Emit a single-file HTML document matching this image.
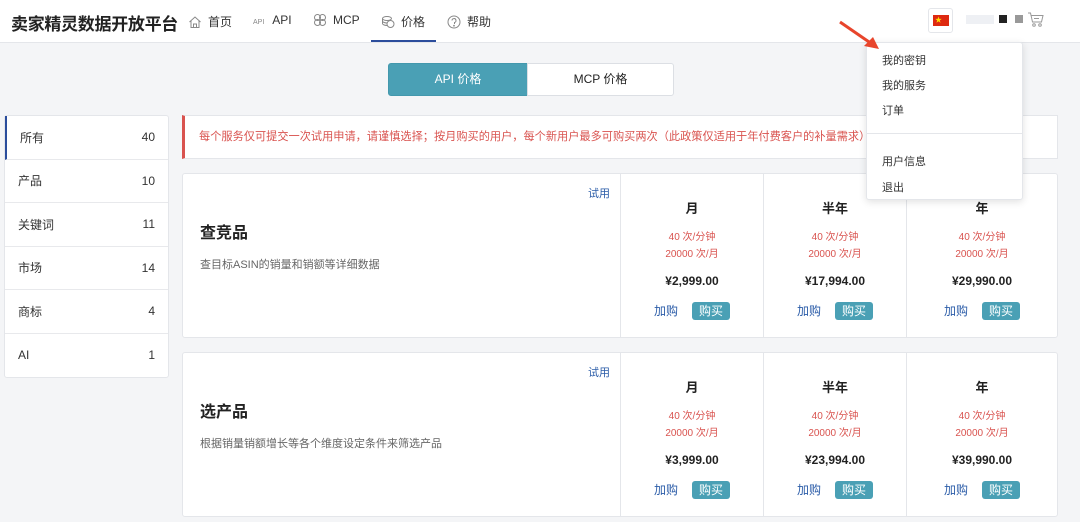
<!DOCTYPE html>
<html><head><meta charset="utf-8"><style>
*{margin:0;padding:0;box-sizing:border-box}
body{width:1080px;height:522px;overflow:hidden;background:#f4f5f7;font-family:"Liberation Sans","Noto Sans CJK SC",sans-serif;color:#333;position:relative}
.hdr{position:absolute;left:0;top:0;width:1080px;height:43px;background:#fff;border-bottom:1px solid #e4e6ea}
.logo{position:absolute;left:11px;top:10px;font-size:17px;font-weight:bold;color:#222;letter-spacing:-0.3px}
.nav{position:absolute;top:13px;font-size:12px;color:#333}
.nav svg{vertical-align:-3px;margin-right:6px}
.ul{position:absolute;left:371px;top:40px;width:65px;height:2px;background:#2b4d9c}
.tog{position:absolute;top:63px;height:33px;font-size:12px;text-align:center;line-height:31px}
.side{position:absolute;left:4px;top:115px;width:165px;background:#fff;border:1px solid #e4e6ea;border-radius:3px}
.side div{height:43.5px;border-bottom:1px solid #e8e9ec;font-size:12px;padding:0 13px;display:flex;justify-content:space-between;align-items:center}
.side div:last-child{border-bottom:none}
.notice{position:absolute;left:182px;top:115px;width:876px;height:44px;background:#fff;border:1px solid #e4e6ea;border-left:3px solid #d9534f;color:#d9534f;font-size:11.2px;line-height:42px;padding-left:14px;white-space:nowrap;overflow:hidden}
.card{position:absolute;left:182px;width:876px;height:165px;background:#fff;border:1px solid #e4e6ea;border-radius:3px}
.card .t{position:absolute;left:17px;top:45px;font-size:16px;font-weight:bold;color:#222}
.card .d{position:absolute;left:17px;top:82px;font-size:11px;color:#666}
.card .try{position:absolute;left:405px;top:11px;font-size:11px;color:#2b5ca8}
.col{position:absolute;top:0;height:163px;border-left:1px solid #e4e6ea;text-align:center}
.col .h{margin-top:24px;font-size:13px;font-weight:bold;color:#222}
.col .r{color:#d9534f;font-size:10px;line-height:17px;margin-top:12px}
.col .p{font-size:12px;font-weight:bold;margin-top:11px;color:#222}
.col .b{margin-top:14px;font-size:12px}
.col .b span{color:#2b5ca8;margin-right:14px}
.col .b i{font-style:normal;background:#4aa0b5;color:#fff;padding:2px 7px;border-radius:3px}
.dd{position:absolute;left:866px;top:42px;width:157px;height:158px;background:#fff;border:1px solid #e4e6ea;border-radius:3px;box-shadow:0 2px 8px rgba(0,0,0,.12);font-size:11px}
.dd div{position:absolute;left:15px}
</style></head><body>
<div class="hdr">
<div class="logo">卖家精灵数据开放平台</div>
<div class="nav" style="left:188px"><svg width="14" height="14" viewBox="0 0 14 14" fill="none" stroke="#888"><path d="M1.5 7L7 2l5.5 5M3 6v6.5h8V6M5.5 12.5V9h3v3.5"/></svg>首页</div>
<div class="nav" style="left:253px"><span style="font-size:7px;color:#888;margin-right:8px">API</span>API</div>
<div class="nav" style="left:313px"><svg width="14" height="14" viewBox="0 0 14 14" fill="none" stroke="#888"><circle cx="4.5" cy="4.5" r="3"/><circle cx="9.5" cy="4.5" r="3"/><circle cx="4.5" cy="9.5" r="3"/><circle cx="9.5" cy="9.5" r="3"/></svg>MCP</div>
<div class="nav" style="left:381px"><svg width="14" height="14" viewBox="0 0 14 14" fill="none" stroke="#888"><ellipse cx="6" cy="3.5" rx="4.5" ry="2"/><path d="M1.5 3.5v5c0 1 2 2 4.5 2M1.5 6c0 1 2 2 4.5 2"/><ellipse cx="9.5" cy="9" rx="3.5" ry="3.5"/></svg>价格</div>
<div class="nav" style="left:447px"><svg width="14" height="14" viewBox="0 0 14 14" fill="none" stroke="#888"><circle cx="7" cy="7" r="6"/><path d="M5 5.5a2 2 0 1 1 2.5 2V9"/><circle cx="7" cy="10.7" r=".4"/></svg>帮助</div>
<div class="ul"></div>
<div style="position:absolute;left:928px;top:8px;width:25px;height:25px;border:1px solid #e4e6ea;border-radius:3px;background:#fff"><div style="position:absolute;left:4px;top:6px;width:16px;height:11px;background:#de2910"><span style="position:absolute;left:2px;top:0;color:#ffde00;font-size:7px">★</span></div></div>
<div style="position:absolute;left:966px;top:15px;width:28px;height:9px;background:#eef0f4"></div>
<div style="position:absolute;left:999px;top:15px;width:8px;height:8px;background:#222"></div>
<div style="position:absolute;left:1015px;top:15px;width:8px;height:8px;background:#999"></div>
<svg style="position:absolute;left:1027px;top:11px" width="17" height="17" viewBox="0 0 17 17" fill="none" stroke="#999"><path d="M1 2h2.5l2 9h9l1.5-6.5H4.5M7 7.5h5"/><circle cx="7" cy="14" r="1.3"/><circle cx="13" cy="14" r="1.3"/></svg>
</div>
<div class="tog" style="left:388px;width:140px;background:#4aa0b5;color:#fff;border:1px solid #4398ad;border-radius:3px 0 0 3px">API 价格</div>
<div class="tog" style="left:527px;width:147px;background:#fff;color:#222;border:1px solid #dcdfe4;border-radius:0 3px 3px 0">MCP 价格</div>
<div class="side">
<div style="border-left:2px solid #2b4d9c"><span>所有</span><span>40</span></div>
<div><span>产品</span><span>10</span></div>
<div><span>关键词</span><span>11</span></div>
<div><span>市场</span><span>14</span></div>
<div><span>商标</span><span>4</span></div>
<div><span>AI</span><span>1</span></div>
</div>
<div class="notice">每个服务仅可提交一次试用申请，请谨慎选择；按月购买的用户，每个新用户最多可购买两次（此政策仅适用于年付费客户的补量需求）</div>
<div class="card" style="top:173px"><div class="t">查竞品</div><div class="d">查目标ASIN的销量和销额等详细数据</div><div class="try">试用</div>
<div class="col" style="left:437px;width:143px"><div class="h">月</div><div class="r">40 次/分钟<br>20000 次/月</div><div class="p">¥2,999.00</div><div class="b"><span>加购</span><i>购买</i></div></div>
<div class="col" style="left:580px;width:143px"><div class="h">半年</div><div class="r">40 次/分钟<br>20000 次/月</div><div class="p">¥17,994.00</div><div class="b"><span>加购</span><i>购买</i></div></div>
<div class="col" style="left:723px;width:151px"><div class="h">年</div><div class="r">40 次/分钟<br>20000 次/月</div><div class="p">¥29,990.00</div><div class="b"><span>加购</span><i>购买</i></div></div>
</div>
<div class="card" style="top:352px"><div class="t">选产品</div><div class="d">根据销量销额增长等各个维度设定条件来筛选产品</div><div class="try">试用</div>
<div class="col" style="left:437px;width:143px"><div class="h">月</div><div class="r">40 次/分钟<br>20000 次/月</div><div class="p">¥3,999.00</div><div class="b"><span>加购</span><i>购买</i></div></div>
<div class="col" style="left:580px;width:143px"><div class="h">半年</div><div class="r">40 次/分钟<br>20000 次/月</div><div class="p">¥23,994.00</div><div class="b"><span>加购</span><i>购买</i></div></div>
<div class="col" style="left:723px;width:151px"><div class="h">年</div><div class="r">40 次/分钟<br>20000 次/月</div><div class="p">¥39,990.00</div><div class="b"><span>加购</span><i>购买</i></div></div>
</div>
<div class="dd">
<div style="top:9px">我的密钥</div><div style="top:34px">我的服务</div><div style="top:59px">订单</div>
<div style="left:0;top:90px;width:155px;height:1px;background:#e4e6ea"></div>
<div style="top:110px">用户信息</div><div style="top:136px">退出</div>
</div>
<svg style="position:absolute;left:836px;top:18px" width="46" height="36" viewBox="0 0 46 36"><path d="M4 4L36 26" stroke="#e8452c" stroke-width="3"/><path d="M43 31L28 28L37 19Z" fill="#e8452c"/></svg>
</body></html>
